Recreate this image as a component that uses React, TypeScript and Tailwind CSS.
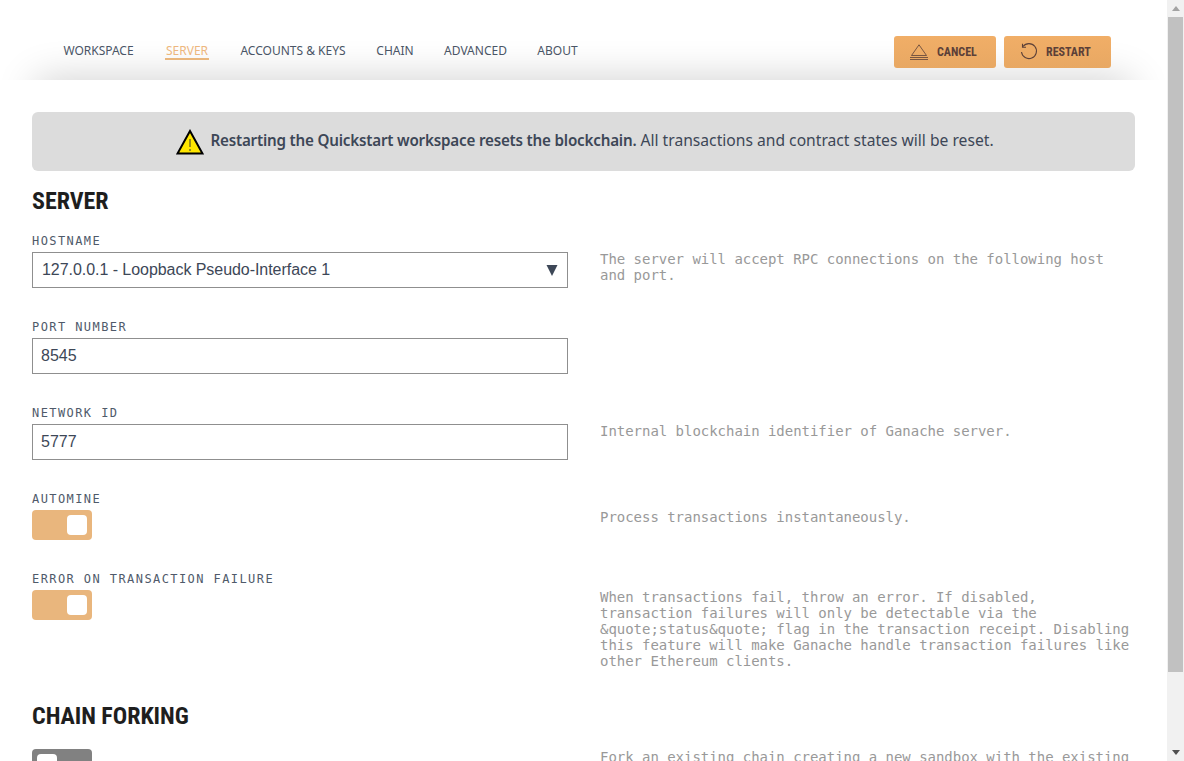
import React from "react";

const mono = "font-['DejaVu_Sans_Mono','Liberation_Mono',monospace]";
const fira = "font-['Noto_Sans','Open_Sans',sans-serif]";

function Label({ children }: { children: React.ReactNode }) {
  return (
    <div className={`${mono} h-[18px] text-[12px] leading-[14px] tracking-[1.42px] text-[#4f5a6a]`}>
      {children}
    </div>
  );
}

function Toggle({ on }: { on: boolean }) {
  return (
    <div className={`flex h-[30px] w-[60px] items-center rounded-[4px] px-[5px] ${on ? "justify-end bg-[#e9b67d]" : "justify-start bg-[#818181]"}`}>
      <div className="h-5 w-5 rounded-[4px] bg-white" />
    </div>
  );
}

function Desc({ children }: { children: React.ReactNode }) {
  return (
    <div className={`${mono} pt-[17px] text-[14px] leading-4 tracking-[-0.03px] text-[#999999]`}>{children}</div>
  );
}

function Row({ left, desc }: { left: React.ReactNode; desc?: React.ReactNode }) {
  return (
    <div className="mb-8 grid grid-cols-[536px_535px] gap-x-8">
      <div>{left}</div>
      <Desc>{desc}</Desc>
    </div>
  );
}

function Field({ value }: { value: string }) {
  return (
    <div className="flex h-9 items-center border border-[#8f8f8f] bg-white pl-2 font-['Liberation_Sans',sans-serif] text-[16px] text-[#3d4757]">
      {value}
    </div>
  );
}

function Heading({ children }: { children: React.ReactNode }) {
  return (
    <h2 className="h-[30px] font-['Roboto',sans-serif] text-[24px] leading-[30px] font-bold tracking-[-0.05px] text-[#1e1e1e] [font-stretch:75%]">
      {children}
    </h2>
  );
}

const tabs = [
  { name: "WORKSPACE", width: "w-[69px]" },
  { name: "SERVER", width: "w-[44px]" },
  { name: "ACCOUNTS & KEYS", width: "w-[104px]" },
  { name: "CHAIN", width: "w-[36px]" },
  { name: "ADVANCED", width: "w-[61px]" },
  { name: "ABOUT", width: "w-[39px]" },
];

const btn =
  "flex h-8 items-center rounded-[3px] bg-gradient-to-b from-[#f1ae67] to-[#e8a863] pl-4";

export default function App() {
  return (
    <div className="flex h-[761px] w-[1184px] overflow-hidden bg-white">
      <div className="h-full w-[1167px] overflow-hidden">
        <header className="relative flex h-20 items-start justify-between overflow-hidden bg-white pr-[56px] pl-16">
          <div className="absolute top-20 right-9 left-9 h-10 shadow-[0_0_40px_rgba(0,0,0,0.2)]" />
          <nav className={`${fira} relative flex gap-8 pt-[43px] text-[12px] text-[#4a5566]`}>
            {tabs.map((t) => (
              <span
                key={t.name}
                className={`${t.width} flex h-[17px] justify-center leading-4 whitespace-nowrap ${t.name === "SERVER" ? "border-b-2 border-[#e9b67d] text-[#edb77e]" : ""}`}
              >
                {t.name}
              </span>
            ))}
          </nav>
          <div className="relative flex gap-2 pt-9 font-['Roboto',sans-serif] text-[12px] font-bold text-[#5c4038] [font-stretch:75%]">
            <button className={`${btn} w-[102px] gap-[9px]`}>
              <svg width="18" height="16" viewBox="0 0 18 16" fill="none" stroke="#5c4038" strokeWidth="0.8">
                <path d="M9 0.8 L16.5 11.5 H1.5 Z" />
                <path d="M0 13.5 H18 M0 15.5 H18" />
              </svg>
              CANCEL
            </button>
            <button className={`${btn} w-[107px] gap-2`}>
              <svg width="18" height="18" viewBox="0 0 18 18" fill="none" stroke="#5c4038" strokeWidth="1.1">
                <path d="M3 3.5 A7.5 7.5 0 1 1 1.5 9" />
                <path d="M2.5 0.8 V4.3 H6" />
              </svg>
              RESTART
            </button>
          </div>
        </header>

        <main className="px-8 pt-8">
          <div className={`${fira} flex h-[59px] w-[1103px] items-center justify-center gap-[6px] rounded-md bg-[#dcdcdc] pl-[3px] text-[15.65px] text-[#3d4757]`}>
            <svg width="28" height="26" viewBox="0 0 28 26">
              <path d="M14 2 L26.5 24.5 H1.5 Z" fill="#ffe600" stroke="#000" strokeWidth="2" strokeLinejoin="miter" />
              <path d="M14 10 V18 M14 20 V22" stroke="#333" strokeWidth="1" />
            </svg>
            <span className="mb-[2px]">
              <b className="text-[15.2px] font-semibold tracking-[-0.2px]">Restarting the Quickstart workspace resets the blockchain.</b> All transactions and contract states will be reset.
            </span>
          </div>

          <div className="mt-[15px] mb-[18px]">
            <Heading>SERVER</Heading>
          </div>

          <Row
            left={<><Label>HOSTNAME</Label>
              <div className="flex h-9 items-center justify-between border border-[#8f8f8f] bg-white px-[9px] font-['Liberation_Sans',sans-serif] text-[16px] tracking-[-0.05px] text-[#3d4757]">
                127.0.0.1 - Loopback Pseudo-Interface 1
                <svg width="12" height="12" viewBox="0 0 12 12"><path d="M0.5 1 H11.5 L6 12 Z" fill="#3d4757" /></svg>
              </div></>}
            desc="The server will accept RPC connections on the following host and port."
          />
          <Row left={<><Label>PORT NUMBER</Label><Field value="8545" /></>} />
          <Row
            left={<><Label>NETWORK ID</Label><Field value="5777" /></>}
            desc="Internal blockchain identifier of Ganache server."
          />
          <Row left={<><Label>AUTOMINE</Label><Toggle on /></>} desc="Process transactions instantaneously." />
          <Row
            left={<><Label>ERROR ON TRANSACTION FAILURE</Label><Toggle on /></>}
            desc="When transactions fail, throw an error. If disabled, transaction failures will only be detectable via the &quote;status&quote; flag in the transaction receipt. Disabling this feature will make Ganache handle transaction failures like other Ethereum clients."
          />

          <Heading>CHAIN FORKING</Heading>
          <div className="mt-[18px] grid grid-cols-[536px_535px] gap-x-8">
            <Toggle on={false} />
            <div className={`${mono} text-[14px] leading-4 tracking-[-0.03px] text-[#999999]`}>
              Fork an existing chain creating a new sandbox with the existing chain's accounts, contracts, transactions and data.
            </div>
          </div>
        </main>
      </div>

      <div className="flex h-full w-[17px] flex-col items-center bg-[#f1f1f1]">
        <div className="flex h-[17px] w-full items-center justify-center">
          <svg width="8" height="5" viewBox="0 0 8 5"><path d="M4 0 L8 5 H0 Z" fill="#a3a3a3" /></svg>
        </div>
        <div className="h-[655px] w-[15px] bg-[#c1c1c1]" />
        <div className="mt-auto flex h-[17px] w-full items-center justify-center">
          <svg width="8" height="5" viewBox="0 0 8 5"><path d="M0 0 H8 L4 5 Z" fill="#505050" /></svg>
        </div>
      </div>
    </div>
  );
}
